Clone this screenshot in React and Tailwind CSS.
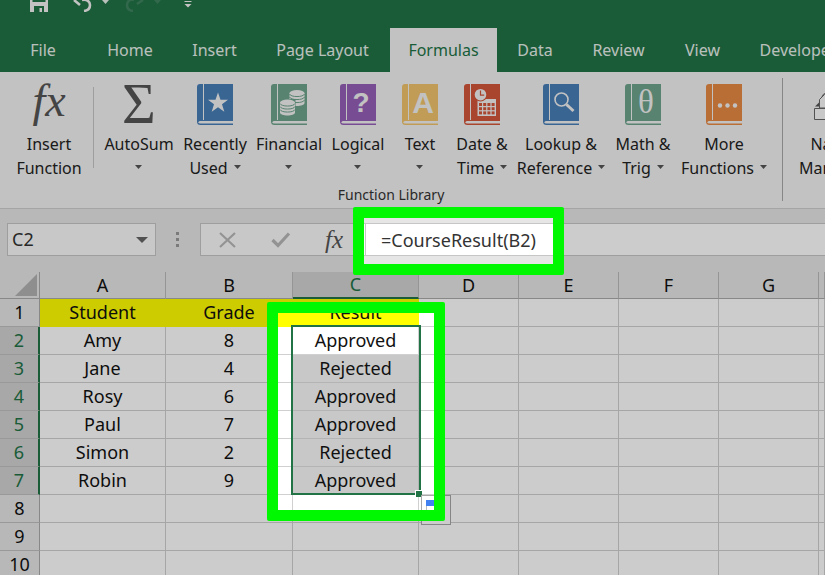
import React from "react";

const tabs = [
  { name: "File", width: "w-[86px]" },
  { name: "Home", width: "w-[88px]" },
  { name: "Insert", width: "w-[81px]" },
  { name: "Page Layout", width: "w-[135px]" },
  { name: "Formulas", width: "w-[107px]", active: true },
  { name: "Data", width: "w-[76px]" },
  { name: "Review", width: "w-[91px]" },
  { name: "View", width: "w-[77px]" },
  { name: "Developer", width: "w-[114px]" },
];

function Caret({ className = "" }) {
  return (
    <svg className={`shrink-0 ${className}`} width="7" height="4" viewBox="0 0 7 4" aria-hidden="true">
      <path d="M0 0h7L3.5 4z" fill="currentColor" />
    </svg>
  );
}

function Book({ color, children }) {
  return (
    <svg className="overflow-visible" width="36" height="41" viewBox="0 0 36 41" aria-hidden="true">
      <path d="M3 0H36V41H3.500Q0 41 0 37.500V3Q0 0 3 0z" fill={color} />
      <path d="M6.500 0V36" stroke="#f3f3f3" strokeWidth="1" />
      <path d="M36 37H3.500Q1.500 37 1.500 38.200T3.500 39.500H36z" fill="#f3f3f3" />
      {children}
    </svg>
  );
}

function Coins({ x, y }) {
  return (
    <g transform={`translate(${x} ${y})`}>
      <path d="M0 3v10c0 4 15 4 15 0V3z" fill="#f3f3f3" />
      <ellipse cx="7.5" cy="3" rx="7.5" ry="3" fill="#f3f3f3" />
      <path d="M0 4c1 3.400 14 3.400 15 0M0 7c1 3.400 14 3.400 15 0M0 10c1 3.400 14 3.400 15 0" fill="none" stroke="#6ea48c" strokeWidth="1" />
    </g>
  );
}

const library = [
  {
    lines: ["AutoSum"],
    width: "w-[82px]",
    icon: (
      <svg className="overflow-visible" width="36" height="41" viewBox="0 0 36 41" aria-hidden="true">
        <text x="18" y="39" textAnchor="middle" fontSize="58" fill="#555" className="font-['Liberation_Serif',serif]">Σ</text>
      </svg>
    ),
  },
  {
    lines: ["Recently", "Used"],
    width: "w-[70px]",
    icon: (
      <Book color="#487fb8">
        <path d="M21 8.500l2.500 7.300h7.500l-6 4.500 2.300 7.400-6.300-4.500-6.300 4.500 2.300-7.400-6-4.500h7.500z" fill="#f3f3f3" />
      </Book>
    ),
  },
  {
    lines: ["Financial"],
    width: "w-[78px]",
    icon: (
      <Book color="#6ea48c">
        <Coins x={18.5} y={6} />
        <path d="M8.500 15h16v18h-16z" fill="#6ea48c" />
        <Coins x={9} y={15.5} />
      </Book>
    ),
  },
  {
    lines: ["Logical"],
    width: "w-[60px]",
    icon: (
      <Book color="#9660b8">
        <text x="21" y="28" textAnchor="middle" fontSize="28" fontWeight="700" fill="#f3f3f3" className="font-['Liberation_Sans',sans-serif]">?</text>
      </Book>
    ),
  },
  {
    lines: ["Text"],
    width: "w-[64px]",
    icon: (
      <Book color="#f0c46c">
        <text x="21" y="29" textAnchor="middle" fontSize="30" fontWeight="700" fill="#f3f3f3" className="font-['Liberation_Sans',sans-serif]">A</text>
      </Book>
    ),
  },
  {
    lines: ["Date &", "Time"],
    width: "w-[60px]",
    icon: (
      <Book color="#d4553a">
        <path d="M13.500 15h18.500v17H13.500z" fill="#f3f3f3" />
        {[0, 1, 2, 3].map((c) =>
          [0, 1, 2].map((r) => (
            <rect key={`${c}-${r}`} x={15 + c * 4.2} y={19 + r * 4.2} width="3" height="3" fill="#d4553a" />
          ))
        )}
        <circle cx="16.500" cy="10.700" r="6.800" fill="#d4553a" />
        <circle cx="16.500" cy="10.700" r="5.800" fill="#f3f3f3" />
        <path d="M16.500 6.500v4.700h3.700" fill="none" stroke="#d4553a" strokeWidth="1.200" />
      </Book>
    ),
  },
  {
    lines: ["Lookup &", "Reference"],
    width: "w-[98px]",
    icon: (
      <Book color="#487fb8">
        <circle cx="18.500" cy="15.500" r="6.500" fill="none" stroke="#f3f3f3" strokeWidth="1.600" />
        <path d="M23.500 20.500l7 6.500" stroke="#f3f3f3" strokeWidth="3" />
      </Book>
    ),
  },
  {
    lines: ["Math &", "Trig"],
    width: "w-[66px]",
    icon: (
      <Book color="#6ea48c">
        <text x="21" y="29" textAnchor="middle" fontSize="33" fill="#f3f3f3" className="font-['Liberation_Serif',serif]">θ</text>
      </Book>
    ),
  },
  {
    lines: ["More", "Functions"],
    width: "w-[96px]",
    icon: (
      <Book color="#e88a44">
        <g fill="#f3f3f3">
          <circle cx="14" cy="21.500" r="2.200" />
          <circle cx="21.500" cy="21.500" r="2.200" />
          <circle cx="29" cy="21.500" r="2.200" />
        </g>
      </Book>
    ),
  },
];

function RibbonButton({ icon, lines, width, caret = true }) {
  return (
    <button type="button" className={`flex shrink-0 flex-col items-center gap-[7px] whitespace-nowrap ${width}`}>
      {icon}
      <span className="flex h-12 flex-col items-center text-[16px] leading-6 text-[#222]">
        <span>{lines[0]}</span>
        <span className="flex h-6 items-center gap-[6px]">
          {lines[1]}
          {caret && <Caret className="mb-[2px] text-[#555]" />}
        </span>
      </span>
    </button>
  );
}

function TitleBar() {
  return (
    <div className="flex h-7 items-start pl-[30px] text-[#e8f1ec]">
      <button type="button" aria-label="Save" className="w-[43px]">
        <svg width="18" height="12" viewBox="0 0 18 12" aria-hidden="true">
          <path d="M0 0h2.500v2h13V0H18v12H0z" fill="#f3f3f3" />
          <path d="M4 12V6h10v6h-2V8H9.500v4z" fill="#217346" />
        </svg>
      </button>
      <button type="button" aria-label="Undo" className="flex w-[52px] gap-[9px]">
        <svg width="20" height="12" viewBox="0 0 20 12" aria-hidden="true">
          <path d="M1 0l6 5M9 0c5-1 8 1.500 8 5 0 3-2 5.500-6 6" fill="none" stroke="#f3f3f3" strokeWidth="2.600" />
        </svg>
        <Caret />
      </button>
      <button type="button" aria-label="Redo" className="flex w-[59px] gap-[9px] text-[#3f8260]" disabled>
        <svg width="20" height="12" viewBox="0 0 20 12" aria-hidden="true">
          <path d="M18 0l-6 4M9 0C4-1 2 2 2 5c0 3 2 5.500 6 6" fill="none" stroke="#3f8260" strokeWidth="2.600" />
        </svg>
        <Caret />
      </button>
      <button type="button" aria-label="Customize toolbar">
        <svg width="8" height="8" viewBox="0 0 8 8" aria-hidden="true">
          <path d="M0.500 1.500h7" stroke="#f3f3f3" />
          <path d="M0.500 4h7L4 7.500z" fill="#f3f3f3" />
        </svg>
      </button>
    </div>
  );
}

function Ribbon() {
  return (
    <section aria-label="Formulas ribbon" className="flex h-[137px] overflow-hidden border-b border-[#cfcfcf] bg-[#f3f3f3]">
      <div className="flex w-[93px] shrink-0 pl-1 pt-3">
        <RibbonButton
          width="w-[90px]"
          lines={["Insert", "Function"]}
          caret={false}
          icon={
            <svg className="overflow-visible" width="40" height="41" viewBox="0 0 40 41" aria-hidden="true">
              <text x="20" y="32" textAnchor="middle" fontSize="46" fontStyle="italic" fill="#555" className="font-['Liberation_Serif',serif]">fx</text>
            </svg>
          }
        />
      </div>
      <div className="mt-[15px] h-[81px] w-px shrink-0 bg-[#c6c6c6]" />
      <div className="flex shrink-0 flex-col pl-1 pt-3">
        <div className="flex">
          {library.map((b) => (
            <RibbonButton key={b.lines.join(" ")} {...b} />
          ))}
        </div>
        <p className="mt-[5px] w-[586px] text-center text-[14px] leading-5 text-[#333]">Function Library</p>
      </div>
      <div className="ml-[10px] mt-[6px] h-[123px] w-px shrink-0 bg-[#a8a8a8]" />
      <div className="shrink-0 pl-[10px] pt-3">
        <RibbonButton
          width="w-[80px]"
          lines={["Name", "Manager"]}
          caret={false}
          icon={
            <svg width="40" height="41" viewBox="0 0 40 41" aria-hidden="true">
              <g fill="#fafafa" stroke="#666">
                <path d="M6.500 24V15.500l5-5h22V24z" />
                <path d="M9 13c1-5 7-5 8 0" fill="none" />
                <path d="M1.500 24.500h37v11h-37z" />
              </g>
              <path d="M2 22.500l4-4v4z" fill="#555" />
            </svg>
          }
        />
      </div>
    </section>
  );
}

function FormulaBar() {
  return (
    <div className="flex h-[63px] items-start bg-[#e6e6e6] pt-[14px] text-[18px] text-[#333]">
      <div className="ml-[7px] flex h-[33px] w-[149px] shrink-0 items-center border border-[#c6c6c6] bg-[#fbfbfb]">
        <input aria-label="Name box" defaultValue="C2" className="w-[120px] bg-transparent pl-1 outline-none" />
        <button type="button" aria-label="Show names" className="pl-2">
          <svg width="12" height="6" viewBox="0 0 12 6" aria-hidden="true"><path d="M0 0h12L6 6z" fill="#666" /></svg>
        </button>
      </div>
      <svg className="ml-5 mt-2 shrink-0" width="4" height="17" viewBox="0 0 4 17" fill="#999" aria-hidden="true">
        <path d="M0 1h3v3H0zM0 7h3v3H0zM0 13h3v3H0z" />
      </svg>
      <div className="ml-5 flex h-[33px] w-[166px] shrink-0 items-center border border-[#c6c6c6] bg-[#fbfbfb] pl-[18px]">
        <button type="button" aria-label="Cancel">
          <svg width="18" height="16" viewBox="0 0 18 16" aria-hidden="true"><path d="M1 1l15 14M16 1L1 15" stroke="#b8b8b8" strokeWidth="2.200" /></svg>
        </button>
        <button type="button" aria-label="Enter" className="ml-[34px]">
          <svg width="20" height="16" viewBox="0 0 20 16" aria-hidden="true"><path d="M1.500 8l5.500 5.500L18 1.500" fill="none" stroke="#b8b8b8" strokeWidth="3.200" /></svg>
        </button>
        <button type="button" aria-label="Insert function" className="ml-[34px] font-['Liberation_Serif',serif] text-[25px] italic leading-[26px] text-[#555]">fx</button>
      </div>
      <input
        aria-label="Formula"
        defaultValue="=CourseResult(B2)"
        className="h-[33px] min-w-0 flex-1 border-y border-[#c6c6c6] bg-white pl-[15px] outline-none"
      />
    </div>
  );
}

const columns = ["A", "B", "C", "D", "E", "F", "G", "H"];
const rows = [
  ["Student", "Grade", "Result"],
  ["Amy", "8", "Approved"],
  ["Jane", "4", "Rejected"],
  ["Rosy", "6", "Approved"],
  ["Paul", "7", "Approved"],
  ["Simon", "2", "Rejected"],
  ["Robin", "9", "Approved"],
  [],
  [],
  [],
];

function cellStyle(r, c) {
  if (r === 0 && c < 3) return "border-[#ffff00] bg-[#ffff00]";
  if (c === 2 && r > 1 && r < 7) return "border-[#b4b4b4] bg-[#c8c8c8]";
  return "border-[#d0d0d0] bg-white";
}

function Selection() {
  return (
    <div className="absolute -left-[2px] -top-[2px] z-10 h-[170px] w-[130px] border-2 border-[#217346]">
      <div className="absolute -bottom-[4px] -right-[3px] h-[7px] w-[7px] border-l border-t border-white bg-[#217346]" />
      <button
        type="button"
        aria-label="Auto fill options"
        className="absolute -bottom-[32px] -right-[32px] h-[30px] w-[30px] border border-[#a8a8a8] bg-white pl-1"
      >
        <svg width="20" height="20" viewBox="0 0 20 20" aria-hidden="true">
          <path d="M0 0h12v6H0z" fill="#4080f0" />
          <path d="M0.500 6v10h9V6" fill="none" stroke="#bbb" />
        </svg>
      </button>
    </div>
  );
}

function Sheet() {
  return (
    <table className="w-full table-fixed border-separate border-spacing-0 text-center text-[18px] leading-[27px] text-[#111]">
      <colgroup>
        <col className="w-[40px]" />
        <col className="w-[126px]" />
        <col className="w-[127px]" />
        <col className="w-[126px]" />
        <col className="w-[100px]" />
        <col className="w-[100px]" />
        <col className="w-[100px]" />
        <col className="w-[100px]" />
        <col />
      </colgroup>
      <thead>
        <tr className="h-[27px] leading-[25px]">
          <th aria-label="Select all" className="border-b border-r border-[#aaa] bg-[#e6e6e6] p-0">
            <svg className="ml-[15px]" width="22" height="22" viewBox="0 0 22 22" aria-hidden="true">
              <path d="M22 0v22H0z" fill="#b2b2b2" />
            </svg>
          </th>
          {columns.map((name) => (
            <th
              key={name}
              scope="col"
              className={`overflow-hidden border-r border-r-[#bbb] p-0 font-normal ${
                name === "C" ? "border-b-2 border-b-[#217346] bg-[#d2d2d2] text-[#217346]" : "border-b border-b-[#aaa] bg-[#e6e6e6]"
              }`}
            >
              {name === "H" ? "" : name}
            </th>
          ))}
        </tr>
      </thead>
      <tbody>
        {rows.map((row, r) => (
          <tr key={r} className="h-7">
            <th
              scope="row"
              className={`border-b border-b-[#c0c0c0] p-0 font-normal ${
                r > 0 && r < 7 ? "border-r-2 border-r-[#217346] bg-[#d2d2d2] text-[#217346]" : "border-r border-r-[#aaa] bg-[#e6e6e6]"
              }`}
            >
              {r + 1}
            </th>
            {columns.map((name, c) => (
              <td key={name} className={`border-b border-r p-0 ${cellStyle(r, c)} ${r === 1 && c === 2 ? "relative" : ""}`}>
                {row[c]}
                {r === 1 && c === 2 && <Selection />}
              </td>
            ))}
          </tr>
        ))}
      </tbody>
    </table>
  );
}

export default function App() {
  return (
    <main className="relative h-screen overflow-hidden bg-white font-['Noto_Sans',sans-serif]">
      <header className="bg-[#217346]">
        <TitleBar />
        <nav aria-label="Ribbon tabs" className="flex h-11 overflow-hidden text-[16px]">
          {tabs.map((t) => (
            <button
              key={t.name}
              type="button"
              className={`shrink-0 whitespace-nowrap ${t.width} ${t.active ? "bg-[#f3f3f3] text-[#217346]" : "text-[#e8f1ec]"}`}
            >
              {t.name}
            </button>
          ))}
        </nav>
      </header>
      <Ribbon />
      <FormulaBar />
      <Sheet />

      {/* Dimmed layer with two clear windows */}
      <svg className="pointer-events-none absolute inset-0 z-20 h-full w-full" aria-hidden="true">
        <path fillRule="evenodd" fill="#000" fillOpacity="0.2" d="M0 0H4000V3000H0zM360 212H558V270H360zM273 308H440V516H273z" />
      </svg>
      <div className="pointer-events-none absolute left-[353px] top-[207px] z-30 h-[68px] w-[211px] rounded-[2px] border-[11px] border-[#00f800]" />
      <div className="pointer-events-none absolute left-[267px] top-[302px] z-30 h-[219px] w-[178px] rounded-[2px] border-[11px] border-[#00f800]" />
    </main>
  );
}
